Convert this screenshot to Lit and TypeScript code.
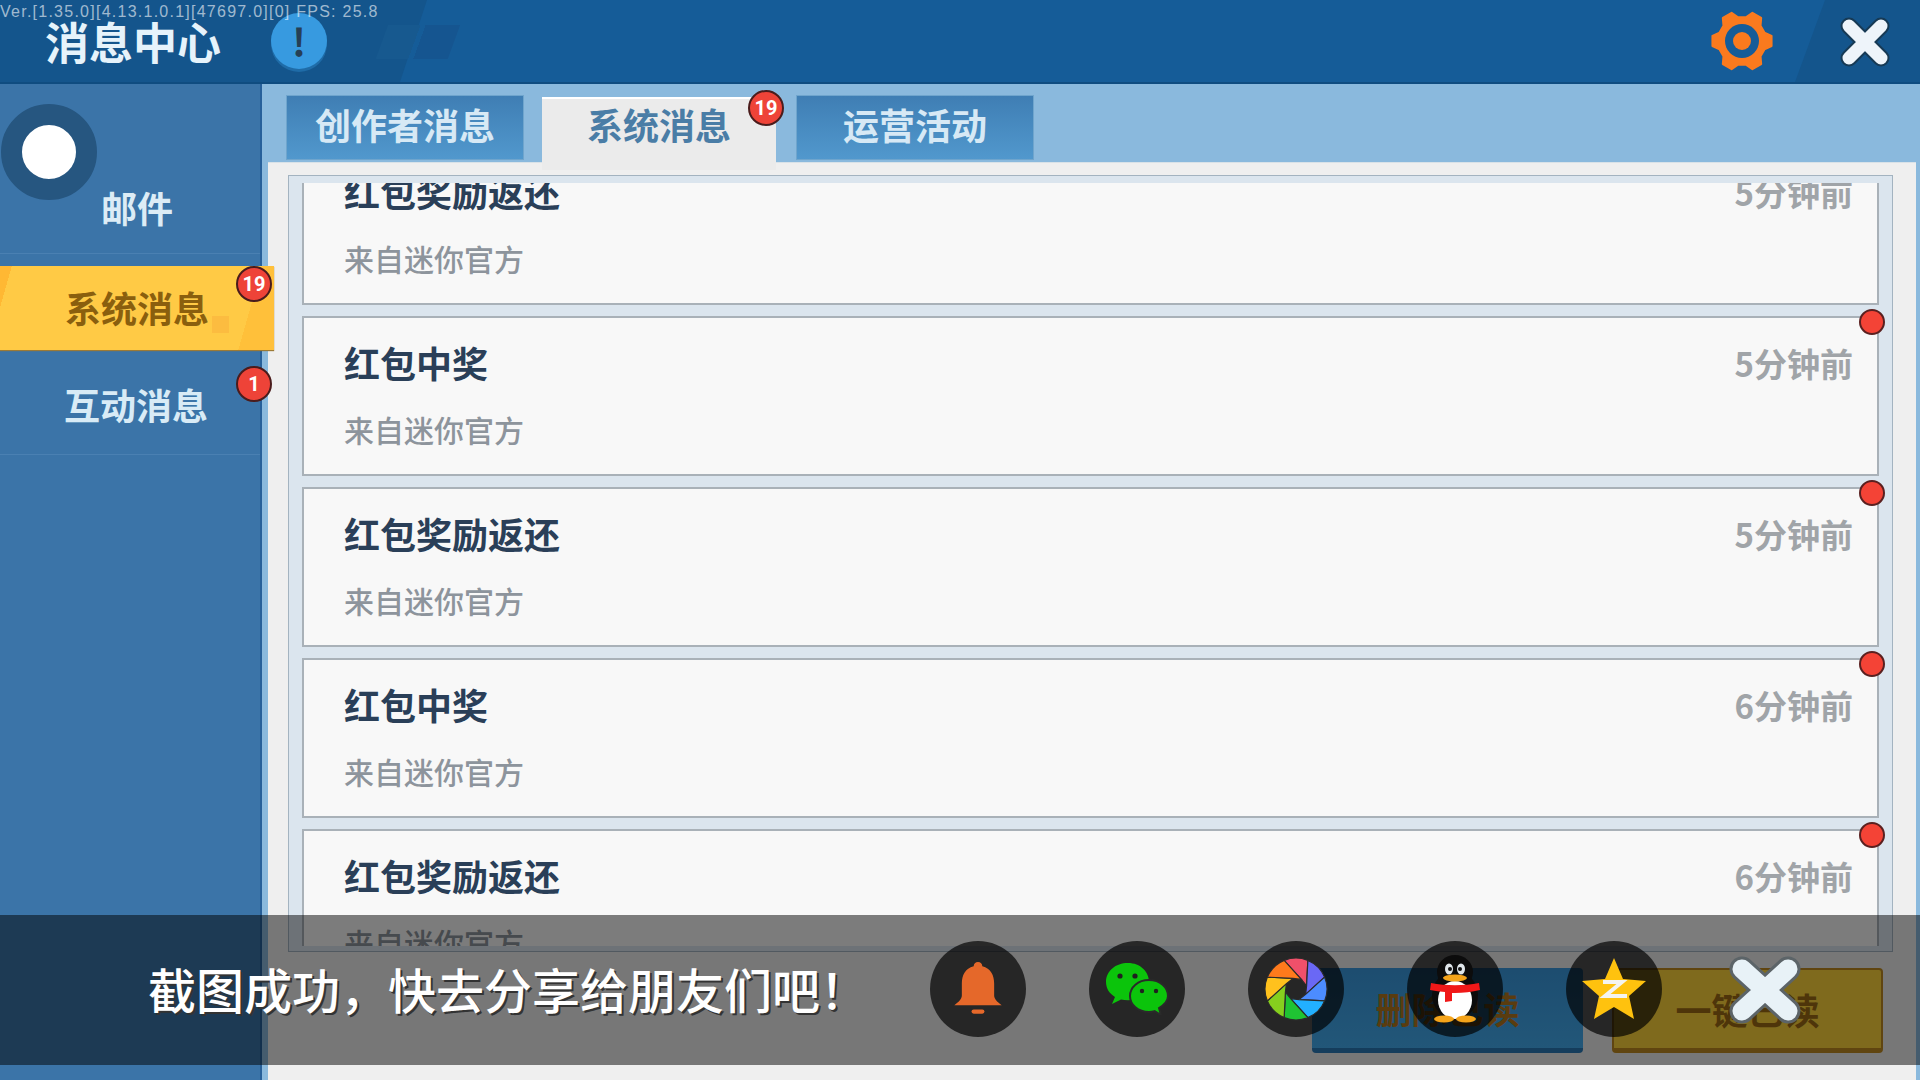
import { LitElement, css, html, svg } from "lit";
import { customElement } from "lit/decorators.js";

const messages = [
  { title: "红包奖励返还", time: "5分钟前", dot: false },
  { title: "红包中奖", time: "5分钟前", dot: true },
  { title: "红包奖励返还", time: "5分钟前", dot: true },
  { title: "红包中奖", time: "6分钟前", dot: true },
  { title: "红包奖励返还", time: "6分钟前", dot: true },
];

// six rounded teeth, one every 60 degrees starting at 3 o'clock
function gearPath() {
  const pts: string[] = [];
  for (let i = 0; i < 6; i++) {
    const a = (i * Math.PI) / 3;
    const at = (r: number, d: number) =>
      `${(32 + r * Math.cos(a + d)).toFixed(2)} ${(32 + r * Math.sin(a + d)).toFixed(2)}`;
    pts.push(at(24, -0.36), at(30, -0.17), at(30, 0.17), at(24, 0.36));
  }
  return `M${pts.join("L")}Z`;
}

const apertureColors = ["#f0506a", "#6a68f5", "#4c8cff", "#22b0ff", "#1fc433", "#86cf1e", "#ffc11d", "#ff7a1c"];

function apertureBlades() {
  return apertureColors.map((color, i) => {
    const step = Math.PI / 4;
    const a0 = -Math.PI / 2 - step / 2 + i * step;
    const a1 = a0 + step;
    const p = (r: number, a: number) => `${(40 + r * Math.cos(a)).toFixed(2)} ${(40 + r * Math.sin(a)).toFixed(2)}`;
    return svg`<path fill=${color} stroke="#2a2a2a" stroke-width="1.2"
      d="M${p(31, a0)}A31 31 0 0 1 ${p(31, a1)}L${p(11, a1 + 0.9)}L${p(11, a0 + 0.9)}Z" />`;
  });
}

@customElement("app-root")
export class AppRoot extends LitElement {
  static styles = css`
    :host {
      display: block;
      position: relative;
      width: 1920px;
      height: 1080px;
      overflow: hidden;
      font-family: "Noto Sans CJK SC", "Noto Sans", sans-serif;
      background: #8ab9dd;
    }

    .version {
      position: absolute;
      top: 1px;
      left: 0;
      z-index: 5;
      font-family: "Liberation Sans", sans-serif;
      font-size: 16px;
      line-height: 22px;
      letter-spacing: 1.25px;
      color: rgba(255, 255, 255, 0.6);
      white-space: nowrap;
    }

    .header {
      position: relative;
      height: 82px;
      display: flex;
      align-items: center;
      padding-left: 45px;
      background: #14558c;
      border-bottom: 2px solid #0f4c80;
      overflow: hidden;
    }
    .header .title {
      position: relative;
      font-size: 44px;
      line-height: 82px;
      font-weight: 700;
      color: #e6f3fb;
    }
    .info {
      position: relative;
      margin-left: 50px;
      width: 56px;
      height: 56px;
      border-radius: 50%;
      background: #379ae0;
      box-shadow: 0 3px 0 #1f6ca8;
      color: #263f55;
      font-size: 38px;
      font-weight: 700;
      line-height: 56px;
      text-align: center;
    }
    .band {
      position: absolute;
      top: 0;
      bottom: 0;
      left: 400px;
      right: 0;
      background: #155c98;
      clip-path: polygon(27px 0, 100% 0, 100% 100%, 0 100%);
    }
    .flag {
      position: absolute;
      top: 25px;
      left: 382px;
      width: 72px;
      height: 34px;
      background: linear-gradient(90deg, #17598f 0 45%, transparent 45% 52%, #155590 52%);
      transform: skewX(-20deg);
    }
    .corner {
      position: absolute;
      top: 0;
      right: 0;
      width: 125px;
      height: 82px;
      background: #14558c;
      clip-path: polygon(30px 0, 100% 0, 100% 100%, 0 100%);
    }
    .gear {
      position: absolute;
      top: 9px;
      left: 1710px;
      width: 64px;
      height: 64px;
    }
    .close {
      position: absolute;
      top: 17px;
      left: 1840px;
      width: 50px;
      height: 50px;
    }

    .body {
      display: flex;
      height: 996px;
    }

    .side {
      position: relative;
      z-index: 2;
      width: 260px;
      flex: none;
      background: #3b74a8;
      border-right: 2px solid #27609a;
    }
    .mail {
      position: relative;
      height: 170px;
      border-bottom: 1px solid #4a80b2;
      padding: 101px 0 0 101px;
      box-sizing: border-box;
      font-size: 36px;
      line-height: 44px;
      font-weight: 700;
      color: #dcecf6;
    }
    .avatar {
      position: absolute;
      top: 20px;
      left: 1px;
      width: 54px;
      height: 54px;
      border: 21px solid #265680;
      border-radius: 50%;
      background: #fff;
    }
    .item {
      position: relative;
      display: flex;
      align-items: center;
      justify-content: center;
      box-sizing: border-box;
      font-size: 36px;
      font-weight: 700;
      color: #d8ebf6;
    }
    .item.on {
      margin-top: 12px;
      width: 274px;
      height: 84px;
      padding-bottom: 2px;
      color: #8a5f0e;
      background: linear-gradient(106deg, #ffb833 0 4%, #ffca45 4% 88%, #ffc03a 88%);
      box-shadow: 0 1px 1px #9c7a35;
    }
    .item.on::after {
      content: "";
      position: absolute;
      left: 212px;
      top: 50px;
      width: 17px;
      height: 17px;
      background: #fcbc40;
    }
    .item.off {
      width: 260px;
      height: 105px;
      padding: 4px 0 0 12px;
      border-bottom: 1px solid #4a80b2;
    }
    .badge {
      position: absolute;
      width: 32px;
      height: 32px;
      border: 2px solid #4a1c1c;
      border-radius: 50%;
      background: #ee4338;
      color: #fff;
      font-family: "Roboto", sans-serif;
      font-size: 20px;
      line-height: 32px;
      text-align: center;
    }
    .item.on .badge {
      top: 0;
      right: 2px;
    }
    .item.off .badge {
      top: 16px;
      right: -12px;
    }

    .main {
      flex: 1;
      display: flex;
      flex-direction: column;
      padding: 0 4px 0 6px;
      min-width: 0;
    }
    .tabs {
      position: relative;
      z-index: 1;
      flex: none;
      height: 78px;
      display: flex;
      padding-left: 18px;
    }
    .tab {
      position: relative;
      width: 238px;
      height: 65px;
      margin: 11px 18px 0 0;
      padding-bottom: 7px;
      display: flex;
      align-items: center;
      justify-content: center;
      box-sizing: border-box;
      font-size: 36px;
      font-weight: 700;
      color: #d7e9f5;
      background: linear-gradient(180deg, #3f7eb4, #5198cd);
      border: 1px solid #6fa5cd;
    }
    .tab.on {
      height: 73px;
      margin: 13px 20px 0 0;
      padding-bottom: 22px;
      width: 234px;
      color: #4a7da6;
      background: #ebebeb;
      border: 0;
      border-top: 2px solid #fff;
    }
    .tab .badge {
      top: -9px;
      right: -8px;
    }

    .panel {
      flex: 1;
      min-height: 0;
      display: flex;
      flex-direction: column;
      padding: 12px 23px 0 20px;
      background: #efefef;
      border-top: 1px solid #d9e2e8;
    }
    .frame {
      flex: none;
      height: 777px;
      box-sizing: border-box;
      padding: 7px 0 5px;
      background: #dbe5ee;
      border: 1px solid #a3b3c0;
      display: flex;
      flex-direction: column;
    }
    .clip {
      flex: 1;
      overflow: hidden;
      padding: 0 13px;
    }
    .list {
      display: flex;
      flex-direction: column;
      gap: 11px;
      margin-top: -38px;
    }
    .card {
      position: relative;
      flex: none;
      height: 160px;
      box-sizing: border-box;
      background: #f8f8f8;
      border: 2px solid #a9b1b8;
      padding: 0 24px 0 40px;
      display: grid;
      grid-template-columns: 1fr auto;
      grid-template-rows: 88px 46px;
      align-items: center;
    }
    .card .name {
      font-size: 36px;
      font-weight: 700;
      color: #2a3f58;
    }
    .card .time {
      padding-top: 2px;
      font-size: 33px;
      font-weight: 700;
      color: #a0a4a8;
    }
    .card .from {
      font-size: 30px;
      font-weight: 500;
      color: #8d949c;
    }
    .dot {
      position: absolute;
      top: -9px;
      right: -8px;
      width: 22px;
      height: 22px;
      border: 2px solid #5a2020;
      border-radius: 50%;
      background: #f44336;
    }
    .actions {
      flex: none;
      display: flex;
      justify-content: flex-end;
      gap: 29px;
      margin-top: 16px;
      padding-right: 10px;
    }
    .btn {
      width: 271px;
      height: 85px;
      box-sizing: border-box;
      display: flex;
      align-items: center;
      justify-content: center;
      border-radius: 4px;
      font-size: 36px;
      font-weight: 700;
    }
    .btn.blue {
      color: #b4781e;
      border-bottom: 5px solid #2a7ab8;
      background: linear-gradient(180deg, #3a9ae0, #44aef2);
    }
    .btn.yellow {
      background: #ffd53a;
      color: #9c6a14;
      border: 2px solid #c08a20;
      border-bottom-width: 5px;
    }

    .shot {
      position: absolute;
      z-index: 4;
      top: 915px;
      left: 0;
      width: 1920px;
      height: 150px;
      display: flex;
      align-items: center;
      box-sizing: border-box;
      padding-left: 148px;
      background: rgba(0, 0, 0, 0.5);
    }
    .shot .msg {
      flex: none;
      width: 782px;
      padding-bottom: 4px;
      font-size: 48px;
      font-weight: 500;
      color: #fff;
      text-shadow: 2px 2px 0 #333;
      white-space: nowrap;
    }
    .share {
      display: flex;
      gap: 63px;
      margin-top: -2px;
    }
    .share span {
      width: 96px;
      height: 96px;
      display: flex;
      align-items: center;
      justify-content: center;
      border-radius: 50%;
      background: rgba(0, 0, 0, 0.68);
    }
    .shot-close {
      position: absolute;
      top: 38px;
      left: 1728px;
      width: 74px;
      height: 74px;
    }
  `;

  render() {
    return html`
      <div class="version">Ver.[1.35.0][4.13.1.0.1][47697.0][0] FPS: 25.8</div>

      <div class="header">
        <div class="band"></div>
        <div class="flag"></div>
        <div class="corner"></div>
        <div class="title">消息中心</div>
        <div class="info">!</div>
        <svg class="gear" viewBox="0 0 64 64">
          <path fill="#fa7a1e" stroke="#fa7a1e" stroke-width="2" stroke-linejoin="round" d=${gearPath()} />
          <circle cx="32" cy="32" r="17" fill="#155c98" />
          <circle cx="32" cy="32" r="9" fill="#fa7a1e" />
        </svg>
        <svg class="close" viewBox="0 0 50 50">
          <path d="M9 9L41 41M41 9L9 41" stroke="#173a55" stroke-width="17" stroke-linecap="round" />
          <path d="M9 9L41 41M41 9L9 41" stroke="#eef4fa" stroke-width="13" stroke-linecap="round" />
        </svg>
      </div>

      <div class="body">
        <div class="side">
          <div class="mail">
            <div class="avatar"></div>
            邮件
          </div>
          <div class="item on">系统消息<span class="badge">19</span></div>
          <div class="item off">互动消息<span class="badge">1</span></div>
        </div>

        <div class="main">
          <div class="tabs">
            <div class="tab">创作者消息</div>
            <div class="tab on">系统消息<span class="badge">19</span></div>
            <div class="tab">运营活动</div>
          </div>
          <div class="panel">
            <div class="frame">
              <div class="clip">
                <div class="list">
                  ${messages.map(
                    (m) => html`
                      <div class="card">
                        <div class="name">${m.title}</div>
                        <div class="time">${m.time}</div>
                        <div class="from">来自迷你官方</div>
                        ${m.dot ? html`<div class="dot"></div>` : ""}
                      </div>
                    `
                  )}
                </div>
              </div>
            </div>
            <div class="actions">
              <div class="btn blue">删除已读</div>
              <div class="btn yellow">一键已读</div>
            </div>
          </div>
        </div>
      </div>

      <div class="shot">
        <div class="msg">截图成功，快去分享给朋友们吧！</div>
        <div class="share">
          <span>
            <svg width="56" height="56" viewBox="0 0 52 52">
              <path fill="#e5682a" d="M26 1c2.4 0 4 1.6 4 3.8C38 7 41 13 41 21v11c0 3.4 3 6 7 9H4c4-3 7-5.6 7-9V21C11 13 14 7 22 4.8 22 2.6 23.6 1 26 1Z" />
              <rect x="20" y="45" width="12" height="4" rx="2" fill="#e5682a" />
            </svg>
          </span>
          <span>
            <svg width="64" height="52" viewBox="0 0 64 52">
              <path fill="#0bc40b" d="M23 0C10.500 0 1 8 1 19c0 6.500 3.400 11.500 9 15l-3 7 9-4.500c2.200.5 4.500.8 7 .8 12.500 0 21-8 21-18.300S35.500 0 23 0Z" />
              <path fill="#0bc40b" stroke="#2a2a2a" stroke-width="2" d="M44 17c-11 0-19 7.200-19 16s8 16 19 16c2 0 3.800-.3 5.600-.8L56 52l-2-7c5-3 9-7 9-12 0-8.800-8-16-19-16Z" />
              <circle cx="15" cy="13" r="2.600" fill="#202020" /><circle cx="30" cy="13" r="2.600" fill="#202020" />
              <circle cx="37" cy="28" r="2.200" fill="#202020" /><circle cx="51" cy="28" r="2.200" fill="#202020" />
            </svg>
          </span>
          <span>
            <svg width="80" height="80" viewBox="0 0 80 80">${apertureBlades()}</svg>
          </span>
          <span>
            <svg width="60" height="68" viewBox="0 0 60 68">
              <ellipse cx="30" cy="40" rx="23" ry="24" fill="#0c0c0c" />
              <ellipse cx="30" cy="17" rx="18" ry="17" fill="#0c0c0c" />
              <ellipse cx="30" cy="45" rx="17" ry="19" fill="#fff" />
              <ellipse cx="24" cy="14" rx="4" ry="5.500" fill="#dfe6ea" /><ellipse cx="36" cy="14" rx="4" ry="5.500" fill="#dfe6ea" />
              <circle cx="25" cy="14" r="2" fill="#111" /><circle cx="35" cy="14" r="2" fill="#111" />
              <ellipse cx="30" cy="23" rx="12" ry="3.500" fill="#f5a41a" />
              <path fill="#f01818" d="M6 28c15 3 33 3 48 0l1 7c-8 2-17 3-25 3h-3v8l-7 1v-10c-5-.5-10-1-15-2Z" />
              <ellipse cx="19" cy="64" rx="10" ry="3.500" fill="#f5a41a" /><ellipse cx="41" cy="64" rx="10" ry="3.500" fill="#f5a41a" />
            </svg>
          </span>
          <span>
            <svg width="66" height="62" viewBox="0 0 66 62">
              <path fill="#ffc20e" d="M33 0l9 21 23 2-17 15 5 23-20-12-20 12 5-23L1 23l23-2Z" />
              <path fill="none" stroke="#f4f4f0" stroke-width="4" d="M22 24h19L24 38h22" />
            </svg>
          </span>
        </div>
        <svg class="shot-close" viewBox="0 0 74 74">
          <path d="M14 16L60 58M60 16L14 58" stroke="#5c6468" stroke-width="25" stroke-linecap="round" />
          <path d="M14 16L60 58M60 16L14 58" stroke="#e8f2f7" stroke-width="19" stroke-linecap="round" />
        </svg>
      </div>
    `;
  }
}
